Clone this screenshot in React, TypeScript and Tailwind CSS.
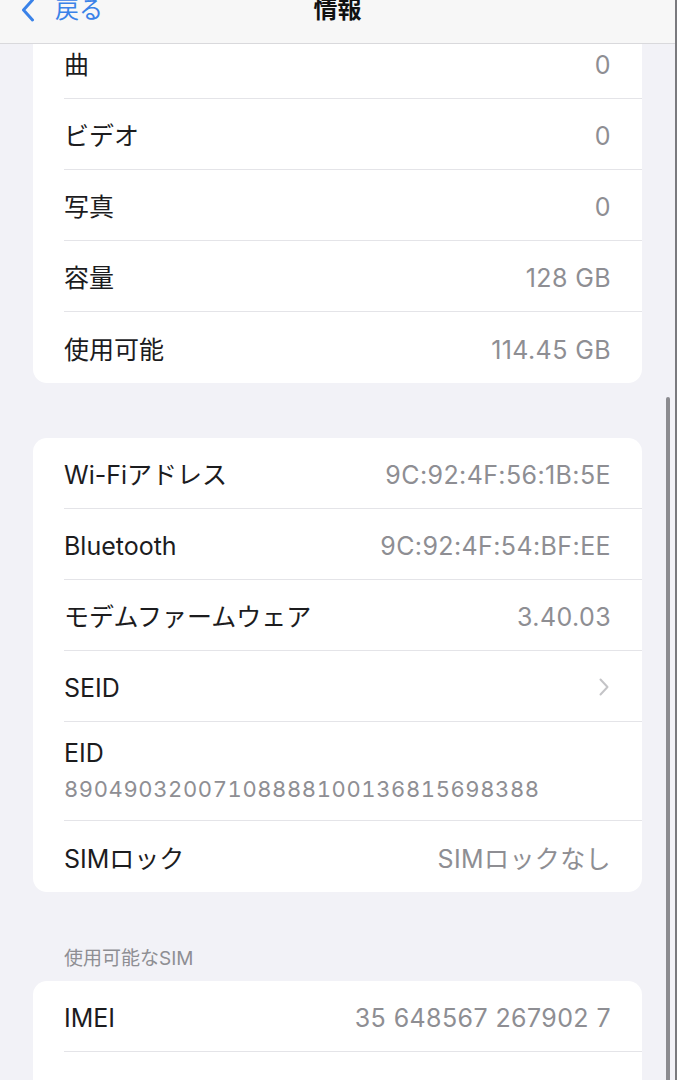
import type { ReactNode } from 'react';

const font = { fontFamily: '"Inter", "Noto Sans CJK JP", sans-serif' };

function Row({ label, value, last, chevron }: { label: string; value?: string; last?: boolean; chevron?: boolean }) {
  return (
    <div className="flex h-[71px] pl-[31px]">
      <div className={`flex flex-1 items-center justify-between pr-[31px] ${last ? '' : 'border-b border-[#e4e4e8]'}`}>
        <span className="pt-[4px] text-[25px] leading-[30px] text-[#1c1c1e]">{label}</span>
        {chevron ? (
          <svg width="10" height="18" viewBox="0 0 10 18" fill="none" className="mr-[2px] mt-[2px]">
            <path d="M1.5 1.5L8.5 9L1.5 16.5" stroke="#c4c4c7" strokeWidth="2" strokeLinecap="round" strokeLinejoin="round" />
          </svg>
        ) : (
          <span className="pt-[4px] text-[25px] leading-[30px] tracking-[0.4px] text-[#8e8e93]">{value}</span>
        )}
      </div>
    </div>
  );
}

function Card({ children, className = '' }: { children: ReactNode; className?: string }) {
  return <div className={`mx-[33px] overflow-hidden rounded-[14px] bg-white ${className}`}>{children}</div>;
}

export default function App() {
  return (
    <div className="relative h-[1080px] w-[677px] overflow-hidden border-r-2 border-[#7a7a7e] bg-[#f2f2f7]" style={font}>
      <div className="pt-[28px]">
        <Card>
          <Row label="曲" value="0" />
          <Row label="ビデオ" value="0" />
          <Row label="写真" value="0" />
          <Row label="容量" value="128 GB" />
          <Row label="使用可能" value="114.45 GB" last />
        </Card>

        <Card className="mt-[55px]">
          <Row label="Wi-Fiアドレス" value="9C:92:4F:56:1B:5E" />
          <Row label="Bluetooth" value="9C:92:4F:54:BF:EE" />
          <Row label="モデムファームウェア" value="3.40.03" />
          <Row label="SEID" chevron />
          <div className="flex h-[99px] pl-[31px]">
            <div className="flex flex-1 flex-col justify-center gap-[6px] border-b border-[#e4e4e8] pr-[31px]">
              <span className="text-[25px] leading-[30px] text-[#1c1c1e]">EID</span>
              <span className="text-[22px] leading-[30px] tracking-[0.6px] text-[#8e8e93] tabular-nums">
                89049032007108888100136815698388
              </span>
            </div>
          </div>
          <Row label="SIMロック" value="SIMロックなし" last />
        </Card>

        <div className="mt-[57px] px-[64px] pb-[12px] text-[19px] leading-[20px] text-[#8e8e93]">使用可能なSIM</div>

        <Card>
          <Row label="IMEI" value="35 648567 267902 7" />
          <Row label="IMEI2" value="35 648567 218815 3" last />
        </Card>
      </div>

      <div className="absolute left-0 right-0 top-0 h-[44px] border-b border-[#d9d9dc] bg-[#f7f7f7]">
        <div className="absolute left-[21px] top-[-3px] flex items-center gap-[20px]">
          <svg width="14" height="24" viewBox="0 0 14 24" fill="none">
            <path d="M11.5 2L2.5 12L11.5 22" stroke="#3a82e8" strokeWidth="3" strokeLinecap="round" strokeLinejoin="round" />
          </svg>
          <span className="text-[24px] leading-[26px] text-[#3a82e8]">戻る</span>
        </div>
        <div className="absolute left-0 right-0 top-[-3px] text-center text-[24px] font-bold leading-[26px] text-[#111]">情報</div>
      </div>

      <div className="absolute right-[5px] top-[397px] h-[700px] w-[4px] rounded-full bg-[#8c8c90]" />
    </div>
  );
}
